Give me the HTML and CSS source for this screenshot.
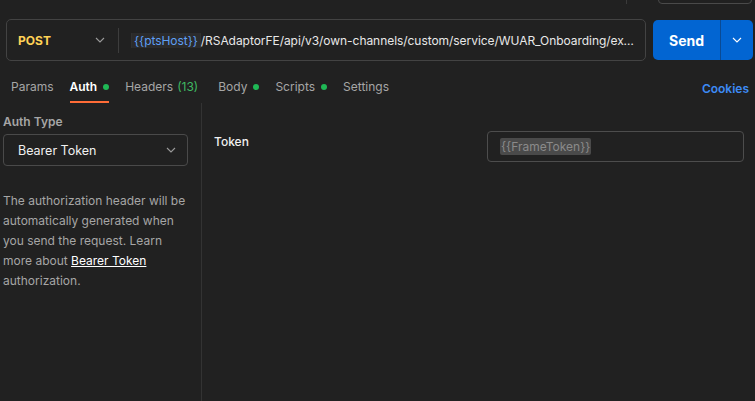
FILE: index.html
```html
<!DOCTYPE html>
<html>
<head>
<meta charset="utf-8">
<link rel="stylesheet" href="styles.css">
</head>
<body>
<div class="app">
  <div class="topstrip">
    <div class="top-sep"></div>
    <div class="save-btn"></div>
  </div>
  <div class="urlrow">
    <div class="urlbox">
      <div class="method">
        <span class="method-name">POST</span>
        <svg class="chev" width="10" height="6" viewBox="0 0 10 6"><path d="M1 1l4 4 4-4" fill="none" stroke="#9a9a9a" stroke-width="1.1"/></svg>
      </div>
      <div class="url-sep"></div>
      <div class="url-text"><span class="var">{{ptsHost}}</span>/RSAdaptorFE/api/v3/own-channels/custom/service/WUAR_Onboarding/execute/verify</div>
    </div>
    <div class="send">
      <span class="send-label">Send</span>
      <span class="send-drop"><svg width="10" height="6" viewBox="0 0 10 6"><path d="M1 1l4 4 4-4" fill="none" stroke="#fff" stroke-width="1.1"/></svg></span>
    </div>
  </div>
  <div class="tabs">
    <div class="tab">Params</div>
    <div class="tab active">Auth<span class="dot"></span></div>
    <div class="tab">Headers <span class="count">(13)</span></div>
    <div class="tab">Body<span class="dot"></span></div>
    <div class="tab">Scripts<span class="dot"></span></div>
    <div class="tab">Settings</div>
    <div class="cookies">Cookies</div>
  </div>
  <div class="content">
    <div class="left">
      <div class="label">Auth Type</div>
      <div class="select">
        <span>Bearer Token</span>
        <svg width="10" height="6" viewBox="0 0 10 6"><path d="M1 1l4 4 4-4" fill="none" stroke="#9a9a9a" stroke-width="1.1"/></svg>
      </div>
      <p class="desc">The authorization header will be automatically generated when you send the request. Learn more about <a class="link">Bearer Token</a> authorization.</p>
    </div>
    <div class="right">
      <div class="field">
        <div class="field-label">Token</div>
        <div class="field-input"><span class="var2">{{FrameToken}}</span></div>
      </div>
    </div>
  </div>
</div>
</body>
</html>
```
FILE: styles.css
```css
* { box-sizing: border-box; }
html, body { margin: 0; padding: 0; background: #212121; }
body { font-family: Inter, "Noto Sans", sans-serif; color: #e6e6e6; width: 755px; height: 401px; overflow: hidden; }
.app { display: flex; flex-direction: column; height: 401px; }

.topstrip { height: 4px; overflow: hidden; display: flex; align-items: flex-end; justify-content: flex-end; padding-right: 3px; }
.top-sep { width: 1px; height: 20px; background: #3a3a3a; margin-right: 31px; }
.save-btn { width: 94px; height: 30px; border: 1px solid #4a4a4a; border-radius: 4px; }

.urlrow { display: flex; margin-top: 15px; padding-left: 6px; padding-right: 2px; gap: 7px; }
.urlbox { flex: 1; min-width: 0; height: 42px; border: 1px solid #434343; border-radius: 5px; display: flex; align-items: center; }
.method { width: 111px; display: flex; align-items: center; padding-left: 11px; }
.method-name { font-size: 12px; font-weight: 700; color: #ffd256; width: 77px; }
.chev { display: block; }
.url-sep { width: 1px; height: 25px; background: #3d3d3d; }
.url-text { flex: 1; min-width: 0; white-space: nowrap; overflow: hidden; text-overflow: ellipsis; font-size: 12px; color: #e8e8e8; padding-left: 12px; padding-right: 6px; letter-spacing: -0.05px; }
.var { color: #5e9ff5; background: #2b2b2b; border: 1px solid #303030; border-radius: 3px; padding: 1px 2px; margin-right: 0; }

.send { width: 100px; height: 40px; margin-top: 1px; background: #0265d2; border-radius: 5px; display: flex; align-items: center; color: #fff; }
.send-label { width: 67px; text-align: center; font-size: 14px; font-weight: 700; }
.send-drop { flex: 1; height: 100%; border-left: 1px solid #0a4a93; display: flex; align-items: center; justify-content: center; }
.send-drop svg { display: block; }

.tabs { display: flex; align-items: stretch; height: 31px; margin-top: 11px; padding-left: 11px; padding-right: 6px; }
.tab { display: flex; align-items: center; font-size: 12px; color: #a6a6a6; margin-right: 16px; border-bottom: 2px solid transparent; padding-top: 0; }
.tab.active { color: #ffffff; font-weight: 600; border-bottom-color: #ff6c37; }
.dot { width: 6px; height: 6px; border-radius: 50%; background: #1fb855; margin-left: 6px; }
.count { color: #3fb962; margin-left: 4px; margin-right: 4px; }
.cookies { margin-left: auto; display: flex; align-items: center; font-size: 12px; font-weight: 600; color: #3d8bf5; padding-top: 2px; }

.content { flex: 1; display: flex; }
.left { width: 202px; border-right: 1px solid #333; padding: 10px 13px 0 3px; }
.label { font-size: 12px; font-weight: 600; color: #a6a6a6; line-height: 18px; }
.select { margin-top: 3px; height: 32px; border: 1px solid #4a4a4a; border-radius: 4px; display: flex; align-items: center; justify-content: space-between; padding: 0 11px 0 14px; font-size: 12.5px; color: #f0f0f0; }
.select svg { display: block; }
.desc { margin: 25px 0 0; font-size: 12px; line-height: 20px; color: #a6a6a6; }
.link { color: #ffffff; text-decoration: underline; }

.right { flex: 1; padding: 28px 11px 0 12px; }
.field { display: flex; align-items: flex-start; }
.field-label { width: 273px; font-size: 12px; font-weight: 500; color: #f0f0f0; padding-top: 3px; }
.field-input { flex: 1; height: 31px; border: 1px solid #4d4d4d; border-radius: 4px; display: flex; align-items: center; padding-left: 12px; }
.var2 { font-size: 12px; color: #8a8a8a; background: #4a4a4a; padding: 1px 1px; border-radius: 2px; }
```
